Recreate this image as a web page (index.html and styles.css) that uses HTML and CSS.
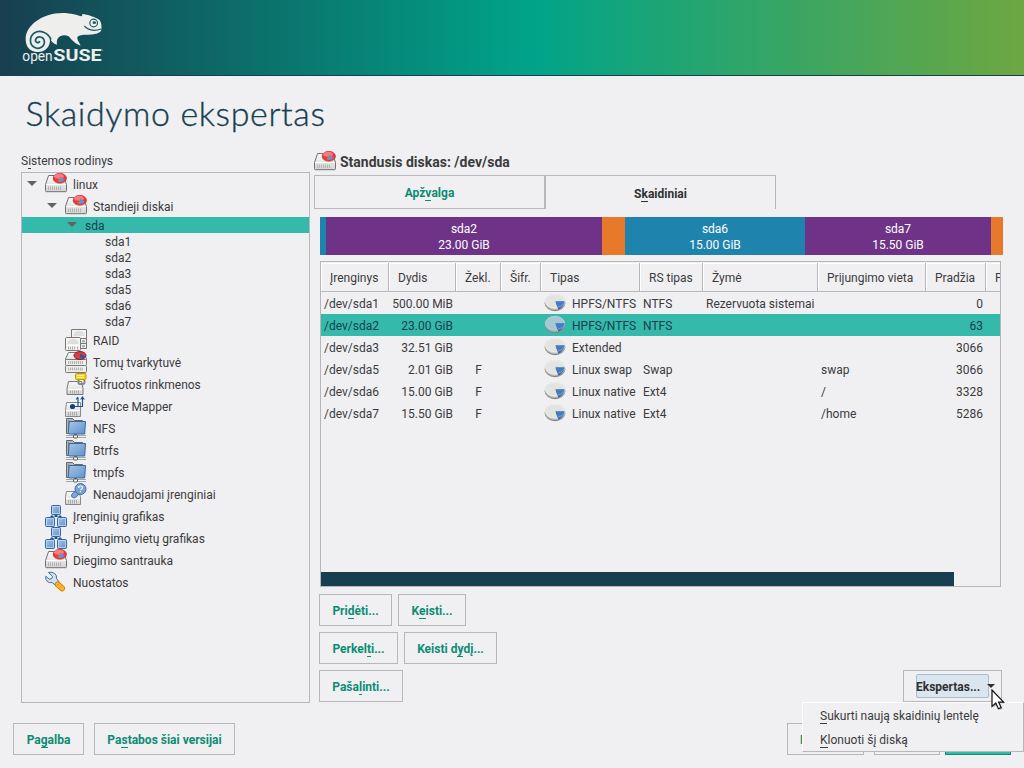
FILE: index.html
```html
<!DOCTYPE html>
<html lang="lt">
<head>
<meta charset="utf-8">
<title>Skaidymo ekspertas</title>
<link rel="stylesheet" href="styles.css">
</head>
<body>
<svg class="defs" aria-hidden="true">
  <defs>
    <linearGradient id="g-body" x1="0" y1="0" x2="0" y2="1"><stop offset="0" stop-color="#fafafa"/><stop offset="1" stop-color="#d4d5d2"/></linearGradient>
    <linearGradient id="g-blue" x1="0" y1="0" x2="1" y2="1"><stop offset="0" stop-color="#a6c5e6"/><stop offset="1" stop-color="#5f92cb"/></linearGradient>
    <symbol id="disk" viewBox="0 1 22 22">
      <path d="M3.600 3.500h14.800l3.100 9v6.200q0 1-1 1h-19q-1 0-1-1v-6.200z" fill="url(#g-body)" stroke="#70716e"/>
      <path d="M1.500 12.500h19" stroke="#fff"/>
      <path d="M3.500 14.500v3.500M5.500 14.500v3.500M7.500 14.500v3.500M9.500 14.500v3.500M11.500 14.500v3.500M13.500 14.500v3.500M15.500 14.500v3.500" stroke="#b3b3b3"/>
      <ellipse cx="14.800" cy="6.300" rx="6.700" ry="5" fill="#e73a3e" stroke="#c4262b" stroke-width=".6"/>
      <ellipse cx="14" cy="4.300" rx="4.800" ry="2.500" fill="#ff9294" opacity=".75"/>
      <path d="M15 7V4.200l4.500 3.500q-1 1.800-4.500 2.600z" fill="#6d8fce"/><path d="M15 7l-2.800 1.800 2.800 1.400z" fill="#7fa06b"/>
    </symbol>
    <symbol id="raid" viewBox="0 0 22 22">
      <path d="M6.500.500h15v13.500h-15z" fill="#f4f4f3" stroke="#777"/><path d="M14.500 9.500h7v10h-7z" fill="#eee" stroke="#777"/><path d="M14.500 14.500h7" stroke="#777"/><path d="M17 12.300h3M17 17.200h3" stroke="#aaa" stroke-width="2"/>
      <path d="M8.500 7q0-5 5.500-5t5.500 5z" fill="#dededb"/>
      <rect x=".5" y="8.500" width="15" height="13" rx="1" fill="#f4f4f3" stroke="#777"/>
      <path d="M2.500 15q0-5 5.500-5t5.500 5z" fill="#dededb"/>
      <path d="M1 16.500h14" stroke="#fff"/><path d="M3.500 17.500v3M5.500 17.500v3M7.500 17.500v3M9.500 17.500v3M12.500 17.500v3" stroke="#aaa"/>
    </symbol>
    <symbol id="lvm" viewBox="0 0 22 22">
      <path d="M3.500 1.500h15l3 6.500v4h-21v-4z" fill="url(#g-body)" stroke="#777"/>
      <rect x=".5" y="8.500" width="21" height="6" rx="1" fill="#efefed" stroke="#777"/>
      <rect x=".5" y="14.500" width="21" height="7" rx="1" fill="#efefed" stroke="#777"/>
      <path d="M3 11.500h15M3 18h15" stroke="#b5b5b5" stroke-width="3" stroke-dasharray="1.200 .8"/>
      <ellipse cx="15" cy="4.500" rx="6" ry="4" fill="#dc3b45" stroke="#8c2030"/>
      <path d="M15 5.500v-3l5 3q0 2-3 2.500z" fill="#275ba3"/>
    </symbol>
    <symbol id="crypt" viewBox="0 0 22 22">
      <path d="M3.500 8.500h13l1.500 7v6h-16v-6z" fill="url(#g-body)" stroke="#777"/><path d="M3 16.500h14" stroke="#fff"/>
      <path d="M5.500 17.500v3M7.500 17.500v3M9.500 17.500v3M11.500 17.500v3M13.500 17.500v3" stroke="#aaa"/>
      <path d="M13.500 7v3q0 1 2 1h2q2 0 2-2V7" fill="none" stroke="#888" stroke-width="2"/>
      <rect x="10.500" y=".5" width="10.500" height="6" rx="1" fill="#f4d51d" stroke="#bf9c0a"/><path d="M12 2.500h7M12 4.500h7" stroke="#fff38f"/>
    </symbol>
    <symbol id="mapper" viewBox="0 0 22 22">
      <path d="M1.500 7.500h14v14h-15v-6z" fill="url(#g-body)" stroke="#888"/><path d="M1 15.500h14" stroke="#fff"/>
      <path d="M3.500 17v3.500M5.500 17v3.500M7.500 17v3.500M9.500 17v3.500M11.500 17v3.500" stroke="#aaa"/>
      <path d="M8 11.500h5v-9M8 11.500h9.500v-9M11.200 4.500L13 2.200 M15.700 4.500l1.800-2.500 1.800 2.500" fill="none" stroke="#26508b" stroke-width="1.200"/><circle cx="7.500" cy="11.500" r="2.600" fill="#153f83"/>
    </symbol>
    <symbol id="netfolder" viewBox="0 0 22 22">
      <path d="M1.500 1.500h6l2 2h8v13h-16z" fill="#b5b6b3" stroke="#666865"/><path d="M3.500 3v13M3 5.500h12" stroke="#858783"/>
      <path d="M4.200 4.500h16.300l-.8 12.500H4.800q-1.500 0-1.500-1.500z" fill="url(#g-blue)" stroke="#3568a7"/>
      <path d="M1 18.500h20M1 20.500h20" stroke="#a5a6a3"/><path d="M10.500 17v2" stroke="#555" stroke-width="2"/><rect x="8.500" y="18" width="4" height="3" rx="1" fill="#fafafa" stroke="#555"/>
    </symbol>
    <symbol id="unused" viewBox="0 0 22 22">
      <path d="M1.500 8.500h12l2 5v8h-15v-8z" fill="url(#g-body)" stroke="#888"/><path d="M1 15.500h14" stroke="#fff"/>
      <path d="M3.500 17v3.500M5.500 17v3.500M7.500 17v3.500M9.500 17v3.500M11.500 17v3.500" stroke="#aaa"/>
      <path d="M9 12.500l2.500-2.300" stroke="#3c6fae" stroke-width="5.500" stroke-linecap="round"/><path d="M9 12.500l2.500-2.300" stroke="#80a9d8" stroke-width="3.800" stroke-linecap="round"/>
      <circle cx="15.500" cy="6" r="5.500" fill="#78a4d6" stroke="#3c6fae"/><path d="M13.500 5q0-2 2-2t2 1.700q0 1-2 2.300M15.500 8v1.200" fill="none" stroke="#fff" stroke-width="1.200"/>
    </symbol>
    <symbol id="graph" viewBox="0 0 22 22">
      <path d="M11 9v3M8 11l-3 3M14 11l3 3" stroke="#274f86" stroke-width="3"/>
      <g fill="url(#g-blue)" stroke="#3465a4"><rect x="6.500" y=".5" width="9" height="9" rx="1"/><rect x=".5" y="12.500" width="9" height="9" rx="1"/><rect x="12.500" y="12.500" width="9" height="9" rx="1"/></g>
      <g fill="none" stroke="#c9dcf0" stroke-width=".8"><rect x="7.600" y="1.600" width="6.800" height="6.800"/><rect x="1.600" y="13.600" width="6.800" height="6.800"/><rect x="13.600" y="13.600" width="6.800" height="6.800"/></g>
    </symbol>
    <symbol id="wrench" viewBox="0 0 22 22">
      <path d="M3.500 1.500l4 3.800-.8 2.400-2.500.5L.800 5.200q-.8 3.500 1.800 5.500 2 1.500 4.500.8l5 4 3-3.300-3.600-4.700q.6-3-1.800-5Q7 .500 3.500 1.500z" fill="#d3e1f1" stroke="#3d70ad"/>
      <path d="M12.800 13.500l4.200 3.700" stroke="#d77b08" stroke-width="6" stroke-linecap="round"/><path d="M12.800 13.500l4.200 3.700" stroke="#fbb62b" stroke-width="4.400" stroke-linecap="round"/><path d="M12 15l2.500-2.500M14.500 17l2.500-2.500" stroke="#e58d10" stroke-width=".8"/>
    </symbol>
    <symbol id="pie" viewBox="0 .3 22 22">
      <ellipse cx="11" cy="11.500" rx="10.300" ry="8" fill="#858782"/>
      <ellipse class="pie-side" cx="11" cy="10.400" rx="10.300" ry="8"/>
      <ellipse class="pie-top" cx="11" cy="9.600" rx="9.500" ry="7" stroke-width=".7"/>
      <path d="M11.500 9.700h9q-.2 4.800-6 8.300z" fill="#3465a4"/><path d="M11.500 9.700h9q-1 4.300-7 5.800z" fill="#437bc4"/><path d="M14 15.500q5-1 6-4" fill="none" stroke="#9bbce3" stroke-width=".7"/>
    </symbol>
  </defs>
</svg>
<div class="screen">
  <header class="banner">
    <svg class="logo" viewBox="60 30 260 170">
      <path fill="#eeeeec" d="M77 118C76 78 125 39 188 39C213 39 233 46 246 49L247 42C262 43 288 52 299 60C305 70 306 82 303 93C291 105 270 104 252 104C238 105 231 109 232 115C233 123 239 130 242 137Q226 134 206 109C194 103 181 106 175 113C170 119 170 127 171 134Q158 132 149 115A34 34 0 0 1 112 156C91 156 77 142 77 118Z"/>
      <path class="logo-line" stroke-width="5" d="M153 119C144 96 119 89 103 99C87 110 88 134 103 142C117 150 135 139 133 124C131 108 112 107 107 118C104 128 117 132 119 123"/>
      <circle class="logo-line" cx="281" cy="69" r="11.500" stroke-width="3.500"/><ellipse cx="283" cy="68" rx="5" ry="4" fill="#155a60"/>
      <path class="logo-line" stroke-width="3.500" d="M253 78Q270 98 304 87"/>
      <text class="logo-open" x="67" y="183" textLength="91" lengthAdjust="spacingAndGlyphs">open</text>
      <text class="logo-suse" x="160" y="183" textLength="145" lengthAdjust="spacingAndGlyphs">SUSE</text>
      <circle cx="308" cy="150" r="1.500" fill="#a9c2c2"/>
    </svg>
  </header>
  <h1 class="title">Skaidymo ekspertas</h1>
  <main class="main">
    <section class="side">
      <div class="side-label">S<u>i</u>stemos rodinys</div>
      <ul class="tree">
        <li class="row l0"><i class="arrow"></i><svg class="ico"><use href="#disk"/></svg>linux</li>
        <li class="row l1"><i class="arrow"></i><svg class="ico"><use href="#disk"/></svg>Standieji diskai</li>
        <li class="row small l2 selected"><i class="arrow"></i>sda</li>
        <li class="row small l3">sda1</li><li class="row small l3">sda2</li><li class="row small l3">sda3</li><li class="row small l3">sda5</li><li class="row small l3">sda6</li><li class="row small l3">sda7</li>
        <li class="row l1 leaf"><svg class="ico"><use href="#raid"/></svg>RAID</li>
        <li class="row l1 leaf"><svg class="ico"><use href="#lvm"/></svg>Tomų tvarkytuvė</li>
        <li class="row l1 leaf"><svg class="ico"><use href="#crypt"/></svg>Šifruotos rinkmenos</li>
        <li class="row l1 leaf"><svg class="ico"><use href="#mapper"/></svg>Device Mapper</li>
        <li class="row l1 leaf"><svg class="ico"><use href="#netfolder"/></svg>NFS</li>
        <li class="row l1 leaf"><svg class="ico"><use href="#netfolder"/></svg>Btrfs</li>
        <li class="row l1 leaf"><svg class="ico"><use href="#netfolder"/></svg>tmpfs</li>
        <li class="row l1 leaf"><svg class="ico"><use href="#unused"/></svg>Nenaudojami įrenginiai</li>
        <li class="row l0 leaf"><svg class="ico"><use href="#graph"/></svg>Įrenginių grafikas</li>
        <li class="row l0 leaf"><svg class="ico"><use href="#graph"/></svg>Prijungimo vietų grafikas</li>
        <li class="row l0 leaf"><svg class="ico"><use href="#disk"/></svg>Diegimo santrauka</li>
        <li class="row l0 leaf"><svg class="ico"><use href="#wrench"/></svg>Nuostatos</li>
      </ul>
    </section>
    <section class="detail">
      <h2 class="heading"><svg class="ico"><use href="#disk"/></svg><span>Standusis diskas: /dev/sda</span></h2>
      <nav class="tabs"><a class="tab"><span>Apž<u>v</u>alga</span></a><a class="tab active"><span>S<u>k</u>aidiniai</span></a></nav>
      <div class="usage">
        <div class="seg blue" style="width:6px"></div>
        <div class="seg purple" style="width:276px">sda2<br>23.00 GiB</div>
        <div class="seg orange" style="width:23px"></div>
        <div class="seg blue" style="width:180px">sda6<br>15.00 GiB</div>
        <div class="seg purple" style="width:186px">sda7<br>15.50 GiB</div>
        <div class="seg orange" style="width:12px"></div>
      </div>
      <div class="table">
        <div class="trow thead"><span>Įrenginys</span><span>Dydis</span><span>Žekl.</span><span>Šifr.</span><span>Tipas</span><span>RS tipas</span><span>Žymė</span><span>Prijungimo vieta</span><span>Pradžia</span><span>P</span></div>
        <div class="trow"><span>/dev/sda1</span><span class="num">500.00 MiB</span><span class="mid"></span><span></span><span class="type"><svg class="ico"><use href="#pie"/></svg>HPFS/NTFS</span><span>NTFS</span><span>Rezervuota sistemai</span><span></span><span class="num">0</span></div>
        <div class="trow selected"><span>/dev/sda2</span><span class="num">23.00 GiB</span><span class="mid"></span><span></span><span class="type"><svg class="ico"><use href="#pie"/></svg>HPFS/NTFS</span><span>NTFS</span><span></span><span></span><span class="num">63</span></div>
        <div class="trow"><span>/dev/sda3</span><span class="num">32.51 GiB</span><span class="mid"></span><span></span><span class="type"><svg class="ico"><use href="#pie"/></svg>Extended</span><span></span><span></span><span></span><span class="num">3066</span></div>
        <div class="trow"><span>/dev/sda5</span><span class="num">2.01 GiB</span><span class="mid">F</span><span></span><span class="type"><svg class="ico"><use href="#pie"/></svg>Linux swap</span><span>Swap</span><span></span><span>swap</span><span class="num">3066</span></div>
        <div class="trow"><span>/dev/sda6</span><span class="num">15.00 GiB</span><span class="mid">F</span><span></span><span class="type"><svg class="ico"><use href="#pie"/></svg>Linux native</span><span>Ext4</span><span></span><span>/</span><span class="num">3328</span></div>
        <div class="trow"><span>/dev/sda7</span><span class="num">15.50 GiB</span><span class="mid">F</span><span></span><span class="type"><svg class="ico"><use href="#pie"/></svg>Linux native</span><span>Ext4</span><span></span><span>/home</span><span class="num">5286</span></div>
        <div class="scroll"></div>
      </div>
      <div class="actions">
        <div class="line"><button class="btn" style="width:73px"><span>Pri<u>d</u>ėti...</span></button><button class="btn" style="width:68px"><span>K<u>e</u>isti...</span></button></div>
        <div class="line"><button class="btn" style="width:79px"><span>Perkel<u>t</u>i...</span></button><button class="btn" style="width:93px"><span>Keisti d<u>y</u>dį...</span></button></div>
        <div class="line"><button class="btn" style="width:84px"><span>Paša<u>l</u>inti...</span></button><button class="btn expert"><span class="expert-label">Ekspertas...</span><i class="drop"></i></button></div>
      </div>
    </section>
  </main>
  <footer class="footer">
    <button class="btn" style="width:71px"><span>Pa<u>g</u>alba</span></button><button class="btn" style="width:141px"><span>Pa<u>s</u>tabos šiai versijai</span></button>
    <button class="btn abort"><span>N</span></button><button class="btn back"></button><button class="btn next"></button>
  </footer>
  <div class="menu"><div class="item"><u>S</u>ukurti naują skaidinių lentelę</div><div class="item"><u>K</u>lonuoti šį diską</div></div>
  <svg class="cursor" viewBox="0 0 15 23"><path d="M1.500 1.500v16l3.700-3.200 2.600 5.700 2.700-1.200-2.500-5.500h4.700z" transform="translate(1 1)" fill="#777" opacity=".5"/><path d="M1 1v16.500l3.800-3.400 2.600 5.700 2.700-1.200-2.500-5.500h5z" fill="#fff" stroke="#111" stroke-width="1.200"/></svg>
</div>
</body>
</html>
```

FILE: styles.css
```css
* { box-sizing: border-box; }
body { margin: 0; background: #f0f0f3; color: #3b3b3b; font: 12px/16px Roboto, sans-serif; --pie-top: #e3e3df; --pie-side: #b9bab6; --pie-rim: #f8f8f6; }
.defs { position: absolute; width: 0; height: 0; }
.screen { position: relative; width: 1024px; height: 768px; overflow: hidden; display: flex; flex-direction: column; }
.banner { height: 76px; flex: none; border-bottom: 1px solid #173f4f; padding: 10px 0 0 20px; background: linear-gradient(90deg, #173f4f 0%, #00a489 52%, #6da741 100%); }
.logo { display: block; width: 86.67px; height: 56.67px; }
.logo-line { fill: none; stroke: #155a60; }
.logo-open, .logo-suse { fill: #eeeeec; font-family: Roboto, sans-serif; font-size: 43px; }
.logo-suse { font-size: 48px; font-weight: 700; }
.title { margin: 0; padding-left: 25.5px; height: 75px; font: 300 34px/74px Lato, sans-serif; letter-spacing: .62px; -webkit-text-stroke: .35px #173f4f; color: #173f4f; }
.main { display: flex; height: 552px; padding-left: 21px; gap: 4px; }
.side { width: 289px; }
.side-label { height: 21px; padding-top: 2px; }
u { text-decoration: none; box-shadow: 0 1px 0 currentColor; display: inline-block; line-height: 13px; }
.tree { list-style: none; margin: 0; padding: 0; height: 531px; border: 1px solid #b7b7ba; }
.row { display: flex; align-items: flex-start; height: 22px; line-height: 24px; white-space: nowrap; }
.row .ico { margin-right: 6px; }
.small { height: 16px; line-height: 18px; }
.l0 { padding-left: 3px; } .l1 { padding-left: 23px; } .l2 { padding-left: 43px; } .l3 { padding-left: 83px; }
.leaf.l0 { padding-left: 23px; } .leaf.l1 { padding-left: 43px; }
.arrow { width: 20px; height: 6px; flex: none; align-self: center; }
.arrow::before { content: ""; display: block; width: 0; border: 5px solid transparent; border-top-color: #626262; border-bottom: 0; margin-left: 1.5px; }
.ico { width: 22px; height: 22px; flex: none; display: block; }
.pie-top { fill: var(--pie-top); stroke: var(--pie-rim); }
.pie-side { fill: var(--pie-side); }
.selected { background: #35b9ab; color: #173f4f; --pie-top: #a6c8d5; --pie-side: #8fb0be; --pie-rim: #b9d7e2; }
.detail { width: 710px; }
.heading { display: flex; align-items: center; gap: 4px; margin: 0; height: 24px; font-size: 14px; font-weight: 700; }
.heading .ico { margin-top: -2px; }
.heading span { padding-bottom: 2px; }
.tabs { display: flex; height: 34px; }
.tab { width: 232px; border: 1px solid #b7b7ba; border-right-width: 2px; font-weight: 700; color: #0c8c73; display: flex; justify-content: center; align-items: center; padding-top: 2px; }
.tab.active { width: 231px; margin-left: -1px; border-left: 0; border-right-width: 1px; border-bottom: 0; color: #303030; padding-left: 1px; }
.usage { display: flex; height: 38px; margin: 8px 0 6px 6px; color: #fff; text-align: center; }
.seg { height: 38px; padding-top: 4px; }
.blue { background: #1f84ad; } .purple { background: #6e3387; } .orange { background: #e8792b; }
.table { margin-left: 6px; width: 681px; height: 326px; border: 1px solid #b7b7ba; overflow: hidden; display: flex; flex-direction: column; }
.trow { display: grid; grid-template-columns: 68px 67px 45px 40px 99px 63px 115px 108px 60px 14px; height: 22px; flex: none; align-items: start; line-height: 24px; white-space: nowrap; }
.trow > span { padding-left: 3px; }
.trow > .num { padding: 0 3px 0 0; text-align: right; }
.trow > .mid { padding: 0; text-align: center; }
.type { display: flex; align-items: flex-start; gap: 6px; }
.thead { height: 30px; padding-top: 1px; align-items: stretch; line-height: 16px; }
.thead > span { padding: 7px 0 0 9px; border: solid #b7b7ba; border-width: 0 1px 1px 0; box-shadow: inset 1px 1px 0 #fff; }
.thead > span:last-child { border-right: 0; overflow: hidden; }
.scroll { margin-top: auto; width: 633px; height: 14px; background: #173f4f; }
.actions { display: flex; flex-direction: column; gap: 6px; margin: 7px 0 0 5px; width: 683px; }
.line { display: flex; gap: 6px; height: 32px; }
.btn { height: 32px; flex: none; padding: 2px 0 0; border: 1px solid #b7b7ba; background: #f0f0f3; color: #0c8c73; font: 700 12px/16px Roboto, sans-serif; white-space: nowrap; }
.expert { width: 99px; margin-left: auto; display: flex; align-items: center; padding: 0 0 0 12px; color: #303030; }
.expert-label { width: 73px; height: 24px; padding-top: 4px; text-align: left; text-indent: -1px; border: 1px solid #a3bfd7; border-radius: 2px; background: #dae5ee; }
.drop { border: 4px solid transparent; border-top-color: #303030; border-bottom: 0; margin-left: -2px; }
.footer { display: flex; margin-top: 20px; padding-left: 13px; }
.footer .btn + .btn { margin-left: 10px; }
.footer .abort.btn { width: 77px; margin-left: 552px; text-align: left; padding-left: 12px; }
.back { width: 66px; }
.footer .next.btn { width: 66px; margin-left: 5px; background: #35b9ab; border-color: #0c8c73; }
.menu { position: absolute; left: 802px; top: 702px; width: 222px; height: 50px; padding: 2px 0 0 17px; background: #f0f0f3; border: 1px solid #fff; border-right-color: #b7b7ba; border-bottom-color: #b7b7ba; }
.item { height: 24px; padding-top: 3px; }
.cursor { position: absolute; left: 991px; top: 689px; width: 15px; height: 23px; }
```
